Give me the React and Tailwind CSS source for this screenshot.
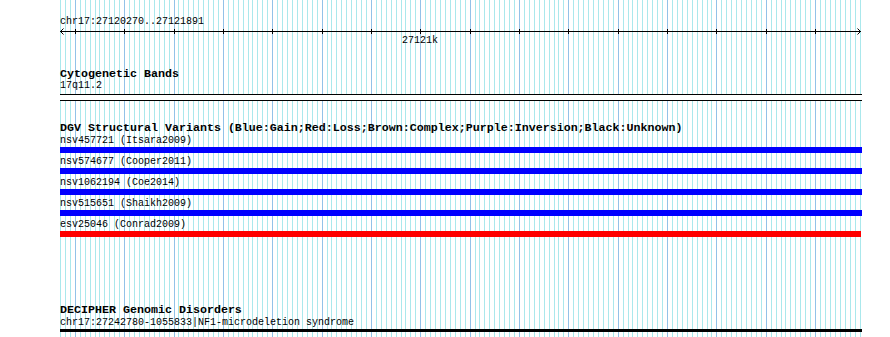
import React from 'react';

const START = 27120270;
const END = 27121891;
const LEFT = 60;
const scale = 800 / (END - START);

const variants = [
  { id: 'nsv457721', study: 'Itsara2009', color: 'bg-[#0000ff]', w: 'w-[802px]' },
  { id: 'nsv574677', study: 'Cooper2011', color: 'bg-[#0000ff]', w: 'w-[802px]' },
  { id: 'nsv1062194', study: 'Coe2014', color: 'bg-[#0000ff]', w: 'w-[802px]' },
  { id: 'nsv515651', study: 'Shaikh2009', color: 'bg-[#0000ff]', w: 'w-[802px]' },
  { id: 'esv25046', study: 'Conrad2009', color: 'bg-[#ff0000]', w: 'w-[801px]' },
];

// background grid, minor line every 10bp, major every 100bp
function Grid() {
  const lines = [];
  for (let bp = START; bp <= END; bp += 10) {
    const x = Math.round(LEFT + (bp - START) * scale) + 0.5;
    lines.push(
      <line
        key={bp}
        x1={x}
        x2={x}
        y1={0}
        y2={337}
        stroke={bp % 100 === 0 ? '#92c2e8' : '#aae8ec'}
      />
    );
  }
  return (
    <svg className="absolute inset-0 pointer-events-none" width="890" height="337" shapeRendering="crispEdges">
      {lines}
    </svg>
  );
}

function Ruler() {
  const ticks = [];
  for (let bp = Math.ceil(START / 100) * 100; bp <= END; bp += 100) {
    const x = Math.round((bp - START) * scale) + 0.5;
    ticks.push(<line key={bp} x1={x} x2={x} y1={3} y2={8} stroke="#000" />);
  }
  return (
    <svg width="802" height="9" className="block" shapeRendering="crispEdges">
      <line x1={0} x2={801} y1={5.5} y2={5.5} stroke="#000" />
      {ticks}
      <polyline points="3.5,2.5 0.5,5.5 3.5,8.5" fill="none" stroke="#000" shapeRendering="auto" />
      <polyline points="797.5,2.5 800.5,5.5 797.5,8.5" fill="none" stroke="#000" shapeRendering="auto" />
    </svg>
  );
}

export default function App() {
  return (
    <div className="relative w-[890px] h-[337px] overflow-hidden bg-white text-black font-['Liberation_Mono',monospace]">
      <Grid />
      <div className="relative flex flex-col pl-[60px]">
        <div className="mt-[16px] h-[10px] text-[10px] leading-[12px] whitespace-nowrap">chr17:27120270..27121891</div>
        <Ruler />
        <div className="ml-[342px] h-[12px] text-[10px] leading-[12px]">27121k</div>

        <div className="mt-[21px] h-[12px] text-[11.67px] leading-[13px] font-bold whitespace-nowrap">Cytogenetic Bands</div>
        <div className="h-[12px] text-[10px] leading-[12px]">17q11.2</div>
        <div className="mt-[2px] w-[802px] h-[7px] border-y border-black bg-white"></div>

        <div className="mt-[21px] h-[12px] text-[11.67px] leading-[13px] font-bold whitespace-nowrap">
          DGV Structural Variants (Blue:Gain;Red:Loss;Brown:Complex;Purple:Inversion;Black:Unknown)
        </div>
        <div className="mt-[1px] flex flex-col gap-[3px]">
          {variants.map((v) => (
            <div key={v.id} className="flex flex-col">
              <div className="h-[12px] text-[10px] leading-[12px] whitespace-nowrap">
                {v.id} ({v.study})
              </div>
              <div className={`${v.w} h-[6px] ${v.color}`}></div>
            </div>
          ))}
        </div>

        <div className="mt-[67px] h-[12px] text-[11.67px] leading-[13px] font-bold whitespace-nowrap">DECIPHER Genomic Disorders</div>
        <div className="mt-[1px] h-[12px] text-[10px] leading-[12px] whitespace-nowrap">chr17:27242780-1055833|NF1-microdeletion syndrome</div>
        <div className="w-[802px] h-[3px] bg-black"></div>
      </div>
    </div>
  );
}
